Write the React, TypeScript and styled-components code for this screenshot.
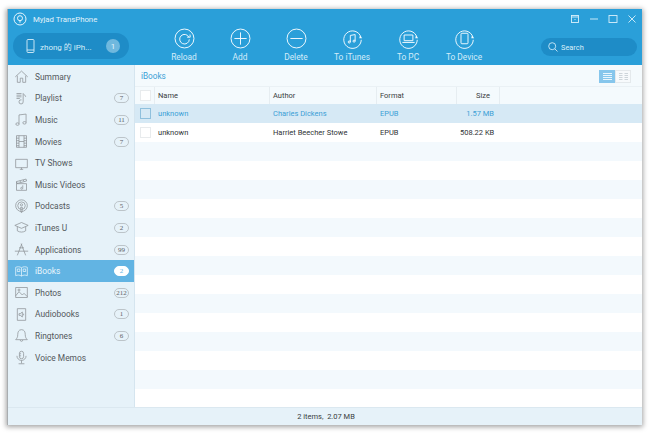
import React from 'react';
import styled, { createGlobalStyle } from 'styled-components';

const Global = createGlobalStyle`
  html, body { margin: 0; padding: 0; background: #fff; }
  body { font-family: Roboto, "Noto Sans CJK SC", sans-serif; font-size: 7.5px; color: #333; }
`;
const Desktop = styled.div`
  width: 650px; height: 434px; box-sizing: border-box; padding: 9px 8px 9px 7px; overflow: hidden;
`;
const Window = styled.div`
  width: 635px; height: 416px; display: flex; flex-direction: column; background: #fff;
  box-shadow: 0 1px 5px 1px rgba(0,0,0,.36); border-left: 1px solid #a9adb0;
  box-sizing: border-box;
`;
const Header = styled.header`
  height: 56px; flex: none; background: #2a9fd9; display: grid; grid-template-columns: 128px 1fr 108px; color: #fff;
`;
const Brand = styled.div`
  display: flex; flex-direction: column; padding: 3px 0 0 5px;
`;
const BrandRow = styled.div`
  display: flex; align-items: center; gap: 6px; height: 14px; font-size: 7.8px; color: #e3f3fb;
`;
const DevicePill = styled.div`
  margin-top: 7px; width: 116px; height: 26px; border-radius: 13px; background: #1e8cc7; box-sizing: border-box;
  display: flex; align-items: center; padding: 0 9px 0 13px; font-size: 8px; color: #d8eef9;
`;
const DeviceName = styled.span`
  margin-left: 5px; flex: 1; white-space: nowrap;
`;
const DeviceCount = styled.span`
  width: 14px; height: 14px; border-radius: 50%; background: #6fb8de; color: #e6f5fc; display: flex; align-items: center; justify-content: center; font-size: 8px;
`;
const Toolbar = styled.nav`
  display: flex; padding: 19px 0 0 20px;
`;
const Tool = styled.div`
  width: 56px; display: flex; flex-direction: column; align-items: center; gap: 3px; font-size: 8.4px; color: #d3ecf9; white-space: nowrap;
`;
const RightBox = styled.div`
  display: flex; flex-direction: column; align-items: flex-end; padding: 4px 5px 0 0;
`;
const Controls = styled.div`
  display: flex; align-items: center; gap: 9px; height: 12px;
`;
const SearchPill = styled.div`
  margin-top: 13px; width: 96px; height: 18px; border-radius: 9px; background: #1e8cc7; box-sizing: border-box;
  display: flex; align-items: center; gap: 3px; padding-left: 7px; font-size: 7.4px; color: #dcf0fa;
`;
const Body = styled.div`
  flex: 1; min-height: 0; display: flex;
`;
const Sidebar = styled.aside`
  width: 126px; flex: none; background: #e6f2f9; border-right: 1px solid #d5e5ef; padding-top: 1px;
`;
const NavItem = styled.div<{ $active?: boolean }>`
  height: 21.6px; display: flex; align-items: center; padding: 0 5px 0 6px; gap: 6px;
  background: ${p => (p.$active ? '#62b4e3' : 'transparent')};
  color: ${p => (p.$active ? '#e8f5fc' : '#53585c')};
  font-size: 8.4px;
`;
const NavLabel = styled.span`
  flex: 1; white-space: nowrap;
`;
const Badge = styled.span<{ $active?: boolean }>`
  min-width: 13px; height: 8px; border-radius: 5px; display: flex; align-items: center; justify-content: center;
  font-family: "Liberation Serif", serif; font-size: 7px;
  border: 1px solid ${p => (p.$active ? '#fff' : '#bcc4c9')};
  background: ${p => (p.$active ? '#fff' : 'transparent')};
  color: ${p => (p.$active ? '#62b4e3' : '#5c6165')};
`;
const Main = styled.main`
  flex: 1; min-width: 0; display: flex; flex-direction: column;
`;
const Crumb = styled.div`
  height: 21px; flex: none; background: #f4fafd; display: flex; align-items: center; justify-content: space-between; padding: 0 11px 0 6px;
  font-size: 8.2px; color: #3b9fd6;
`;
const ViewSwitch = styled.div`
  display: flex; height: 13px; margin-top: 1px;
`;
const ViewBtn = styled.div<{ $on?: boolean }>`
  width: 16px; height: 13px; box-sizing: border-box; display: flex; align-items: center; justify-content: center;
  background: ${p => (p.$on ? '#86c6ec' : '#f7fafc')}; border: 1px solid ${p => (p.$on ? '#86c6ec' : '#e4e9ec')};
`;
const Grid = styled.div`
  flex: 1; min-height: 0; overflow: hidden;
`;
const columns = '20px 115px 107px 80px 43px';
const Row = styled.div<{ $bg: string; $blue?: boolean }>`
  height: 19px; display: grid; grid-template-columns: ${columns}; align-items: center;
  background: ${p => p.$bg}; color: ${p => (p.$blue ? '#3b9fd6' : '#2f3336')};
`;
const HeadRow = styled.div`
  height: 17px; display: grid; grid-template-columns: ${columns}; background: #f4fafd; border-top: 1px solid #eaf1f5; color: #3a3e41;
`;
const HeadCell = styled.div<{ $right?: boolean }>`
  display: flex; align-items: center; padding: 0 3px; box-sizing: border-box; border-right: 1px solid #e6edf1;
  justify-content: ${p => (p.$right ? 'flex-end' : 'flex-start')};
  padding-right: ${p => (p.$right ? '9px' : '3px')};
`;
const Cell = styled.div<{ $right?: boolean }>`
  padding: 0 3px; white-space: nowrap; text-align: ${p => (p.$right ? 'right' : 'left')};
  padding-right: ${p => (p.$right ? '6px' : '3px')};
  margin-top: -1px;
`;
const CheckBox = styled.div<{ $blue?: boolean }>`
  width: 11px; height: 11px; margin-left: 5px; box-sizing: border-box; background: ${p => (p.$blue ? 'transparent' : '#fff')};
  border: 1px solid ${p => (p.$blue ? '#8fc0dd' : '#e8ebed')};
`;
const HeadCheckCell = styled(HeadCell)`
  padding: 0;
`;
const Status = styled.footer`
  height: 17px; flex: none; background: #e6f2f9; display: flex; align-items: center; justify-content: center; padding-left: 2px; color: #3a3e41;
  border-top: 1px solid #dbe8f0;
`;

const S: React.FC<{ c?: string; children: React.ReactNode }> = ({ c = '#8d9296', children }) => (
  <svg width="15" height="15" viewBox="0 0 18 18" fill="none" stroke={c} strokeWidth="0.9" style={{ flex: 'none' }}>{children}</svg>
);
const T: React.FC<{ children: React.ReactNode }> = ({ children }) => (
  <svg width="21" height="21" viewBox="0 0 24 24" fill="none" stroke="#f2fafe" strokeWidth="1.100">{children}</svg>
);
const Arrow = () => <path d="M20.500 8.500l2.600 3.200-3.400 0z" fill="#f2fafe" stroke="none" />;
const ArcRing = () => <path d="M21.600 10.500A10 10 0 1 0 22 13.500" />;

const icons: Record<string, (c: string) => React.ReactNode> = {
  Summary: c => <S c={c}><path d="M1.500 9.500L9 2.500l7.500 7M4 8v8h3.500v-5h3v5H14V8" /></S>,
  Playlist: c => <S c={c}><path d="M3 3h6M3 5h6M3 7h6M3 9h4M11 3v10a2.500 2.500 0 1 1-2-2.400M11 3c1 2 3 2 3 4" /></S>,
  Music: c => <S c={c}><path d="M6 14V3.500l8.500-1V12.500" /><ellipse cx="4.200" cy="14.500" rx="2" ry="1.500" /><ellipse cx="12.600" cy="13" rx="2" ry="1.500" /></S>,
  Movies: c => <S c={c}><path d="M3 2h12v14H3zM6 2v14M12 2v14M6 9h6M3 5h3M3 8h3M3 11h3M3 14h3M12 5h3M12 8h3M12 11h3M12 14h3" /></S>,
  'TV Shows': c => <S c={c}><path d="M2 4h14v10H2zM7 16h4M9 14v2" /></S>,
  'Music Videos': c => <S c={c}><path d="M3 8h12v8H3zM3 5.500l11.500-3 .6 2.300-11.500 3zM3 8l0-2.500M7 4.500l1.200 2M11 3.500l1.200 2M10.500 10v3.400a1.200 1.200 0 1 1-1-1.100" /></S>,
  Podcasts: c => <S c={c}><circle cx="9" cy="8" r="7" /><circle cx="9" cy="8" r="4.500" /><circle cx="9" cy="7" r="1.300" /><path d="M8 10h2l-.4 6h-1.200z" /></S>,
  'iTunes U': c => <S c={c}><path d="M1 6.500L9 3l8 3.500L9 10zM4 8v5c3 2 7 2 10 0V8" /></S>,
  Applications: c => <S c={c}><path d="M1 11h16M9.500 2L4 16M8.500 2l5.500 14M6 7h6" /></S>,
  iBooks: c => <S c={c}><path d="M2 4c2-1 5-1 7 .5C11 3 14 3 16 4v10c-2-1-5-1-7 .5C7 13 4 13 2 14zM9 4.500v10M4 6h3v3H4zM11 6h3v3h-3z" /></S>,
  Photos: c => <S c={c}><path d="M2 3h14v12H2zM2 13l4-5 4 4 2-2 4 4" /><circle cx="6" cy="6" r="1.200" /></S>,
  Audiobooks: c => <S c={c}><path d="M4 2h10v14H4zM6 8h1.500L10 6v6L7.500 10H6zM11.500 8v2" /></S>,
  Ringtones: c => <S c={c}><path d="M9 2c-3.500 0-4.500 3-4.500 6 0 3-1 4.500-2.500 6h14c-1.500-1.500-2.500-3-2.500-6 0-3-1-6-4.500-6zM7.500 14.500a1.500 1.500 0 0 0 3 0" /></S>,
  'Voice Memos': c => <S c={c}><rect x="6.500" y="1.500" width="5" height="9" rx="2.500" /><path d="M3.500 7a5.500 5.500 0 0 0 11 0M9 12.500V16M5.500 16.500h7M6.500 4.500h2M6.500 7h2" /></S>,
};
const nav: [string, string?][] = [
  ['Summary'], ['Playlist', '7'], ['Music', '11'], ['Movies', '7'], ['TV Shows'], ['Music Videos'], ['Podcasts', '5'],
  ['iTunes U', '2'], ['Applications', '99'], ['iBooks', '2'], ['Photos', '212'], ['Audiobooks', '1'], ['Ringtones', '6'], ['Voice Memos'],
];
const tools: [string, React.ReactNode][] = [
  ['Reload', <T><circle cx="12" cy="12" r="10.800" /><path d="M17 10.500A5.500 5.500 0 1 0 17.500 13" /><path d="M15 10.500h3.500l-.2-3" /></T>],
  ['Add', <T><circle cx="12" cy="12" r="10.800" /><path d="M12 5v14M5 12h14" /></T>],
  ['Delete', <T><circle cx="12" cy="12" r="10.800" /><path d="M5 12h14" /></T>],
  ['To iTunes', <T><ArcRing /><Arrow /><path d="M9.500 16V8.500l5.500-1V15" /><circle cx="8.300" cy="16" r="1.200" /><circle cx="13.800" cy="15" r="1.200" /></T>],
  ['To PC', <T><ArcRing /><Arrow /><path d="M7 8h10v6.500H7zM5 16.500h14" /></T>],
  ['To Device', <T><ArcRing /><Arrow /><rect x="8" y="6" width="8" height="12" rx="1" /></T>],
];
const Ctl: React.FC<{ children: React.ReactNode }> = ({ children }) => (
  <svg width="10" height="10" viewBox="0 0 10 10" fill="none" stroke="#d9f0fb" strokeWidth=".9">{children}</svg>
);
const rows = [
  { name: 'unknown', author: 'Charles Dickens', format: 'EPUB', size: '1.57 MB' },
  { name: 'unknown', author: 'Harriet Beecher Stowe', format: 'EPUB', size: '508.22 KB' },
];

export default function App() {
  return (
    <Desktop>
      <Global />
      <Window>
        <Header>
          <Brand>
            <BrandRow>
              <svg width="14" height="14" viewBox="0 0 14 14" fill="none" stroke="#e8f6fd" strokeWidth="1">
                <circle cx="7" cy="7" r="6" /><circle cx="7" cy="6.200" r="2.500" /><path d="M7 8.700v2" />
              </svg>
              Myjad TransPhone
            </BrandRow>
            <DevicePill>
              <svg width="9" height="14" viewBox="0 0 9 14" fill="none" stroke="#d8eef9" strokeWidth=".9"><rect x="1" y=".5" width="7" height="13" rx="1" /><path d="M1 11h7" /></svg>
              <DeviceName>zhong 的 iPh...</DeviceName>
              <DeviceCount>1</DeviceCount>
            </DevicePill>
          </Brand>
          <Toolbar>
            {tools.map(([label, icon]) => (
              <Tool key={label}>{icon}<span>{label}</span></Tool>
            ))}
          </Toolbar>
          <RightBox>
            <Controls>
              <Ctl><rect x="1.500" y="1.500" width="7" height="7" /><path d="M1.500 3h7M4.500 5.500h1" /></Ctl>
              <Ctl><path d="M1 5h8" /></Ctl>
              <Ctl><rect x="1" y="1.500" width="8" height="7" /></Ctl>
              <Ctl><path d="M1.500 1.500l7 7M8.500 1.500l-7 7" /></Ctl>
            </Controls>
            <SearchPill>
              <svg width="10" height="10" viewBox="0 0 10 10" fill="none" stroke="#cfeaf8" strokeWidth=".9"><circle cx="4.200" cy="4.200" r="3.500" /><path d="M6.800 6.800L9.500 9.500" /></svg>
              Search
            </SearchPill>
          </RightBox>
        </Header>
        <Body>
          <Sidebar>
            {nav.map(([label, count]) => {
              const active = label === 'iBooks';
              return (
                <NavItem key={label} $active={active}>
                  {icons[label](active ? '#e8f5fc' : '#8d9296')}
                  <NavLabel>{label}</NavLabel>
                  {count && <Badge $active={active}>{count}</Badge>}
                </NavItem>
              );
            })}
          </Sidebar>
          <Main>
            <Crumb>
              <span>iBooks</span>
              <ViewSwitch>
                <ViewBtn $on>
                  <svg width="9" height="7" viewBox="0 0 9 7" stroke="#e9f6fd" strokeWidth="1"><path d="M0 .5h9M0 2.500h9M0 4.500h9M0 6.500h9" /></svg>
                </ViewBtn>
                <ViewBtn>
                  <svg width="9" height="7" viewBox="0 0 9 7" stroke="#cdd5da" strokeWidth="1"><path d="M0 .5h3.500M5.500 .5h3.500M0 2.500h3.500M5.500 2.500h3.500M0 4.500h3.500M5.500 4.500h3.500M0 6.500h3.500M5.500 6.500h3.500" /></svg>
                </ViewBtn>
              </ViewSwitch>
            </Crumb>
            <HeadRow>
              <HeadCheckCell><CheckBox /></HeadCheckCell>
              <HeadCell>Name</HeadCell>
              <HeadCell>Author</HeadCell>
              <HeadCell>Format</HeadCell>
              <HeadCell $right>Size</HeadCell>
            </HeadRow>
            <Grid>
              {Array.from({ length: 16 }, (_, i) => {
                const r = rows[i];
                const bg = i === 0 ? '#d6e9f5' : i % 2 ? '#fff' : '#f3f9fd';
                return (
                  <Row key={i} $bg={bg} $blue={i === 0}>
                    {r && (
                      <>
                        <CheckBox $blue={i === 0} />
                        <Cell>{r.name}</Cell>
                        <Cell>{r.author}</Cell>
                        <Cell>{r.format}</Cell>
                        <Cell $right>{r.size}</Cell>
                      </>
                    )}
                  </Row>
                );
              })}
            </Grid>
          </Main>
        </Body>
        <Status>2 items,&nbsp; 2.07 MB</Status>
      </Window>
    </Desktop>
  );
}
